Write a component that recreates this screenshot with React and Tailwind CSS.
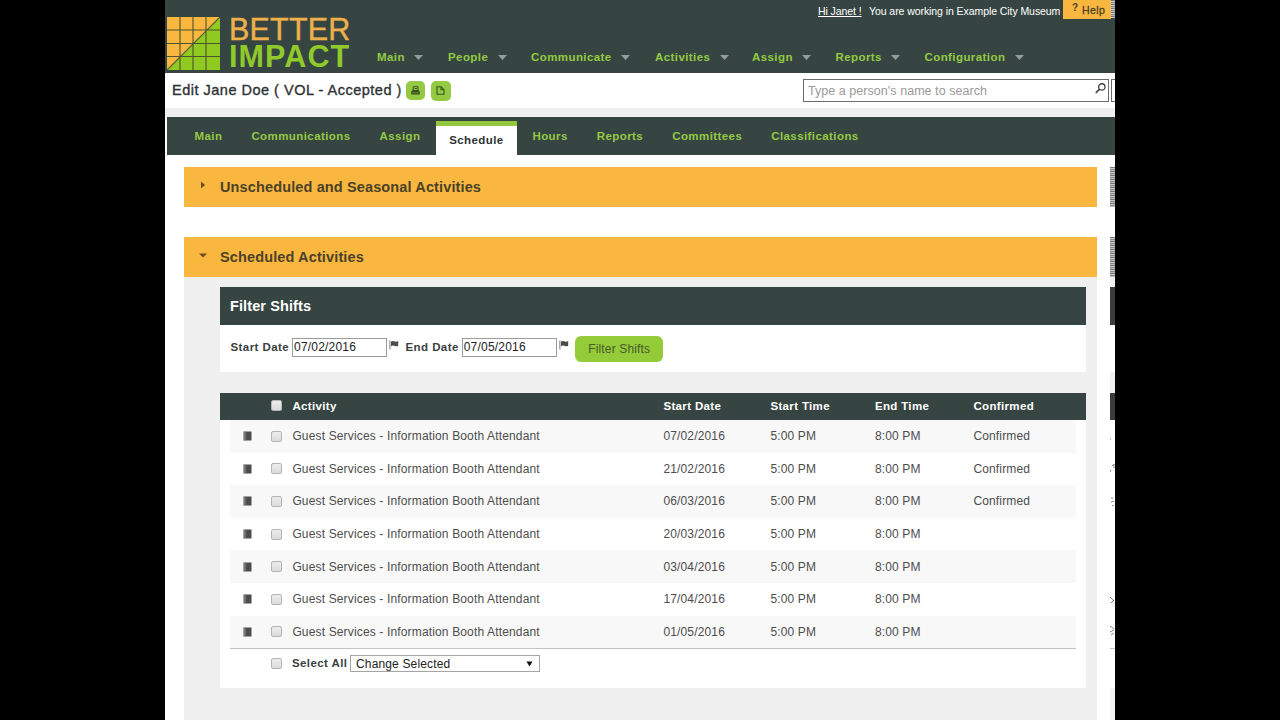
import React from 'react';

const menu = [
    { label: 'Main', width: 'w-[71px]' },
    { label: 'People', width: 'w-[83px]' },
    { label: 'Communicate', width: 'w-[124px]' },
    { label: 'Activities', width: 'w-[97px]' },
    { label: 'Assign', width: 'w-[83.5px]' },
    { label: 'Reports', width: 'w-[89px]' },
    { label: 'Configuration', width: 'w-[110px]' },
];

const tabs = ['Main', 'Communications', 'Assign', 'Schedule', 'Hours', 'Reports', 'Committees', 'Classifications'];

const shifts = [
    { date: '07/02/2016', confirmed: true },
    { date: '21/02/2016', confirmed: true },
    { date: '06/03/2016', confirmed: true },
    { date: '20/03/2016', confirmed: false },
    { date: '03/04/2016', confirmed: false },
    { date: '17/04/2016', confirmed: false },
    { date: '01/05/2016', confirmed: false },
];

const columns = 'grid grid-cols-[62.4px_371px_107px_104.5px_98.5px_1fr] items-center';

const Logo = () => (
    <div className="flex pt-[17px] pl-[2px]">
        <svg width="53" height="53" viewBox="0 0 53 53" className="shrink-0">
            <rect width="53" height="53" fill="#fab73f" />
            <path d="M53 0V53H0Z" fill="#90c91f" />
            <path d="M13 0V53M26 0V53M39 0V53M0 13H53M0 26.500H53M0 39.500H53M0 53L53 0" stroke="#4c5330" strokeWidth="1.1" fill="none" />
        </svg>
        <div className="ml-[9px] -mt-px w-[128px] text-[30.5px] leading-[27px] whitespace-nowrap">
            <div className="text-[#eeb04b] tracking-[0.2px] [-webkit-text-stroke:0.4px_#eeb04b]">BETTER</div>
            <div className="font-bold text-[#90c92a] tracking-[1.1px]">IMPACT</div>
        </div>
    </div>
);

const Checkbox = () => (
    <span className="block w-[11px] h-[11px] rounded-[2px] border border-[#b4b4b4] bg-linear-to-b from-[#ececec] to-[#dcdcdc]" />
);

const NotebookIcon = () => (
    <svg width="9" height="10" viewBox="0 0 9 10">
        <rect x="0.500" y="0.500" width="8" height="9" fill="#4c4c4c" />
        <path d="M1.200 0.500V9.500" stroke="#b0b0b0" strokeWidth="1.4" strokeDasharray="1 1" />
        <path d="M2.700 0.500V9.500" stroke="#858585" strokeWidth="0.7" />
    </svg>
);

const FlagIcon = () => (
    <svg width="10" height="10" viewBox="0 0 10 10">
        <path d="M0.900 0.500V9.500" stroke="#777" strokeWidth="1" />
        <path d="M2 1.600C3.500 0.500 5 1 6 1.500C7 2 8 1.700 9.200 1V5.700C8 6.500 7 6.500 6 6C5 5.500 3.500 5.200 2 6.300Z" fill="#4b4b4b" />
    </svg>
);

const SectionBar = ({ title, open }) => (
    <div className="flex items-center h-[39.5px] bg-[#fab73f] text-[#4a4228] text-[14.5px] font-bold tracking-[0.13px]">
        <svg width="8" height="8" viewBox="0 0 8 8" className="ml-[15px] mr-[13px] -mt-[4px]">
            <path d={open ? 'M0 2.500H8L4 6.500Z' : 'M2 0.500V7.500L6 4Z'} fill="#6b4d21" />
        </svg>
        <span className="pt-[3px]">{title}</span>
    </div>
);

const Header = () => (
    <header className="flex h-[73px] bg-[#374542]">
        <Logo />
        <div className="flex-1 flex flex-col">
            <div className="flex justify-end h-[19px] text-[10.5px] leading-[22px] tracking-[-0.07px] text-white whitespace-nowrap">
                <span className="underline w-[51px]">Hi Janet !</span>
                <span className="w-[194px]">You are working in Example City Museum</span>
                <span className="flex w-[48px] bg-[#fab73f] text-[#4a4228] pl-[9px]">
                    <span className="w-[10px] leading-[15px] font-bold text-[10px]">?</span>
                    <span className="text-[10.5px] leading-[21px] tracking-[0.4px] [-webkit-text-stroke:0.3px_#4a4228]">Help</span>
                </span>
                <Noise className="w-[4px] h-[18px]" />
            </div>
            <nav className="flex pl-[20px] mt-[30px] text-[11.5px] leading-[16px] font-bold tracking-[0.42px] text-[#93ca42]">
                {menu.map((item) => (
                    <span key={item.label} className={`flex items-center ${item.width}`}>
                        {item.label}
                        <svg width="9" height="5" viewBox="0 0 9 5" className="ml-[9.500px]">
                            <path d="M0 0H9L4.500 5Z" fill="#939d9b" />
                        </svg>
                    </span>
                ))}
            </nav>
        </div>
    </header>
);

// Striped sliver where the next panel starts
const Noise = ({ className }) => (
    <div className={`shrink-0 bg-[repeating-linear-gradient(180deg,#77777c_0px,#77777c_1px,#c9c9cc_1px,#c9c9cc_2px,#8d8a94_2px,#8d8a94_3px,#b9bdb8_3px,#b9bdb8_4px)] ${className}`} />
);

const TitleRow = () => (
    <div className="flex items-center h-[34.5px] pl-[7px] text-[#2e3335]">
        <h1 className="w-[234px] pt-px text-[14.5px] tracking-[0.5px] whitespace-nowrap [-webkit-text-stroke:0.35px_#2e3335]">Edit Jane Doe ( VOL - Accepted )</h1>
        <span className="flex items-center justify-center w-[19px] h-[19px] mt-px rounded-[5px] bg-[#93ca42]">
            <svg width="9" height="9" viewBox="0 0 9 9">
                <path d="M2.200 0.700H7V4.500H2.200ZM3.500 2.500H6" fill="none" stroke="#39521f" strokeWidth="1" />
                <path d="M0.300 5.300L1.500 4.300H7.700L8.700 5.300V8.500H0.300Z" fill="#39521f" />
                <path d="M1.500 6.800H7.500" stroke="#80a94a" strokeWidth="0.7" />
            </svg>
        </span>
        <span className="flex items-center justify-center w-[20px] h-[20px] mt-px ml-[5.500px] rounded-[5px] bg-[#93ca42]">
            <svg width="9" height="9" viewBox="0 0 9 9">
                <path d="M1 0.700H5L8 3.700V8.300H1ZM5 0.700V3.700H8" fill="none" stroke="#39521f" strokeWidth="1.1" />
            </svg>
        </span>
        <div className="flex justify-between ml-auto mt-px w-[306px] h-[23px] border border-[#6c6c6c] pl-[4px] pr-[2px]">
            <span className="text-[12.5px] leading-[23px] tracking-[0.05px] text-[#9a9a9a]">Type a person's name to search</span>
            <svg width="11" height="11" viewBox="0 0 10 10" className="mt-[3px]">
                <circle cx="6.200" cy="3.600" r="2.900" fill="none" stroke="#444" strokeWidth="1.200" />
                <path d="M4 5.800L0.700 9" stroke="#444" strokeWidth="1.500" />
            </svg>
        </div>
        <div className="w-[4px] h-[23px] mt-px ml-[2px] border-y border-l border-[#6c6c6c]" />
    </div>
);

const DateField = ({ label, value }) => (
    <div className="flex items-center">
        <span className="mr-[3px] text-[11.5px] font-bold tracking-[0.42px]">{label}</span>
        <span className="w-[95px] h-[19px] border border-[#9c9c9c] pl-[1px] text-[12px] leading-[17px] tracking-[0.2px] text-[#222]">{value}</span>
        <span className="ml-[2px] mb-[5px]"><FlagIcon /></span>
    </div>
);

const FilterPanel = () => (
    <div className="bg-white h-[84.500px]">
        <h2 className="h-[38px] pl-[10px] bg-[#374542] text-white text-[14.5px] leading-[39px] font-bold tracking-[0.1px]">Filter Shifts</h2>
        <div className="flex items-center h-[45px] pl-[10.500px] gap-[6.500px] text-[#39413f]">
            <DateField label="Start Date" value="07/02/2016" />
            <DateField label="End Date" value="07/05/2016" />
            <span className="flex items-center justify-center w-[88px] h-[26px] mt-[2px] rounded-[6px] bg-[#93cb39] text-[12px] tracking-[0.15px] text-[#4a5a2a]">Filter Shifts</span>
        </div>
    </div>
);

const ShiftTable = () => (
    <div className="mt-[21.500px] h-[295px] bg-white text-[12px] tracking-[0.15px] text-[#4d4d4d]">
        <div className={`${columns} h-[27px] px-[10px] bg-[#374542] text-white text-[11.5px] font-bold tracking-[0.35px]`}>
            <span className="pl-[41px] pb-[3px]"><Checkbox /></span>
            <span className="pt-px">Activity</span>
            <span className="pt-px">Start Date</span>
            <span className="pt-px">Start Time</span>
            <span className="pt-px">End Time</span>
            <span className="pt-px">Confirmed</span>
        </div>
        <div className="mx-[10px] border-b border-[#c4c4c4]">
            {shifts.map((shift) => (
                <div key={shift.date} className={`${columns} h-[32.600px] odd:bg-[#f8f8f8]`}>
                    <span className="flex items-center pl-[12.500px] gap-[19.500px]">
                        <NotebookIcon />
                        <Checkbox />
                    </span>
                    <span>Guest Services - Information Booth Attendant</span>
                    <span>{shift.date}</span>
                    <span>5:00 PM</span>
                    <span>8:00 PM</span>
                    <span>{shift.confirmed ? 'Confirmed' : ''}</span>
                </div>
            ))}
        </div>
        <div className="flex items-center h-[29px] pl-[51px]">
            <Checkbox />
            <span className="ml-[10px] w-[58px] text-[11.5px] font-bold tracking-[0.4px] text-[#39413f] whitespace-nowrap">Select All</span>
            <span className="flex items-center justify-between w-[190px] h-[17px] border border-[#a5a5a5] pl-[5px] pr-[6px] text-[#222]">
                Change Selected
                <svg width="7" height="6" viewBox="0 0 7 6">
                    <path d="M0.500 0.500H6.500L3.500 5.500Z" fill="#111" />
                </svg>
            </span>
        </div>
    </div>
);

// Edge of the neighbouring panel, cut off by the window
const NextPanelEdge = () => (
    <div className="w-[5px] ml-[13px] shrink-0 flex flex-col overflow-hidden">
        <Noise className="h-[39.500px]" />
        <div className="h-[30.500px] shrink-0" />
        <Noise className="h-[39.500px]" />
        <div className="h-[10.500px] shrink-0 bg-[#f0f0f0]" />
        <div className="h-[38px] shrink-0 bg-[#3b3d3d]" />
        <div className="h-[46.500px] shrink-0" />
        <div className="h-[21.500px] shrink-0 bg-[#f0f0f0]" />
        <div className="h-[27px] shrink-0 bg-[#3b3d3d]" />
        <svg width="5" height="268" viewBox="0 0 5 268" className="shrink-0">
            <path d="M0 19H1M0 52L1 50M2 46L4 44V48M1 78H3M1 82L4 81M2 86L4 85M0 177L4 181M1 183L4 180M0 206L4 209M0 212L4 210M1 215L4 213" stroke="#666" strokeWidth="0.8" fill="none" />
            <path d="M0 228.500H5" stroke="#c4c4c4" />
        </svg>
        <div className="flex-1 bg-[#f4f4f4]" />
    </div>
);

const App = () => (
    <div className="w-[1280px] h-[720px] overflow-hidden bg-black font-['Liberation_Sans',Arial,sans-serif]">
        <div className="flex flex-col w-[950px] h-[720px] ml-[165px] overflow-hidden bg-white">
            <Header />
            <TitleRow />
            <div className="h-[9.500px] shrink-0 bg-[#f0f0f0]" />
            <div className="flex h-[37.500px] shrink-0 ml-[2px] pl-[13px] bg-[#374542] text-[11.5px] leading-[39px] font-bold tracking-[0.42px] text-[#93ca42]">
                {tabs.map((tab) => (
                    tab === 'Schedule' ? (
                        <span key={tab} className="w-[81px] mx-[1px] mt-[4px] h-[33.500px] border-t-[5px] border-[#93c83d] bg-white text-center leading-[29px] text-[#2e3335]">{tab}</span>
                    ) : (
                        <span key={tab} className="px-[14.500px]">{tab}</span>
                    )
                ))}
            </div>
            <main className="flex flex-1 pt-[12.500px] pl-[19px]">
                <div className="w-[913px] shrink-0 flex flex-col">
                    <SectionBar title="Unscheduled and Seasonal Activities" />
                    <div className="h-[30.500px]" />
                    <SectionBar title="Scheduled Activities" open />
                    <div className="flex-1 bg-[#f0f0f0] pt-[10.500px] pl-[36px] pr-[11px]">
                        <FilterPanel />
                        <ShiftTable />
                    </div>
                </div>
                <NextPanelEdge />
            </main>
        </div>
    </div>
);

export default App;
